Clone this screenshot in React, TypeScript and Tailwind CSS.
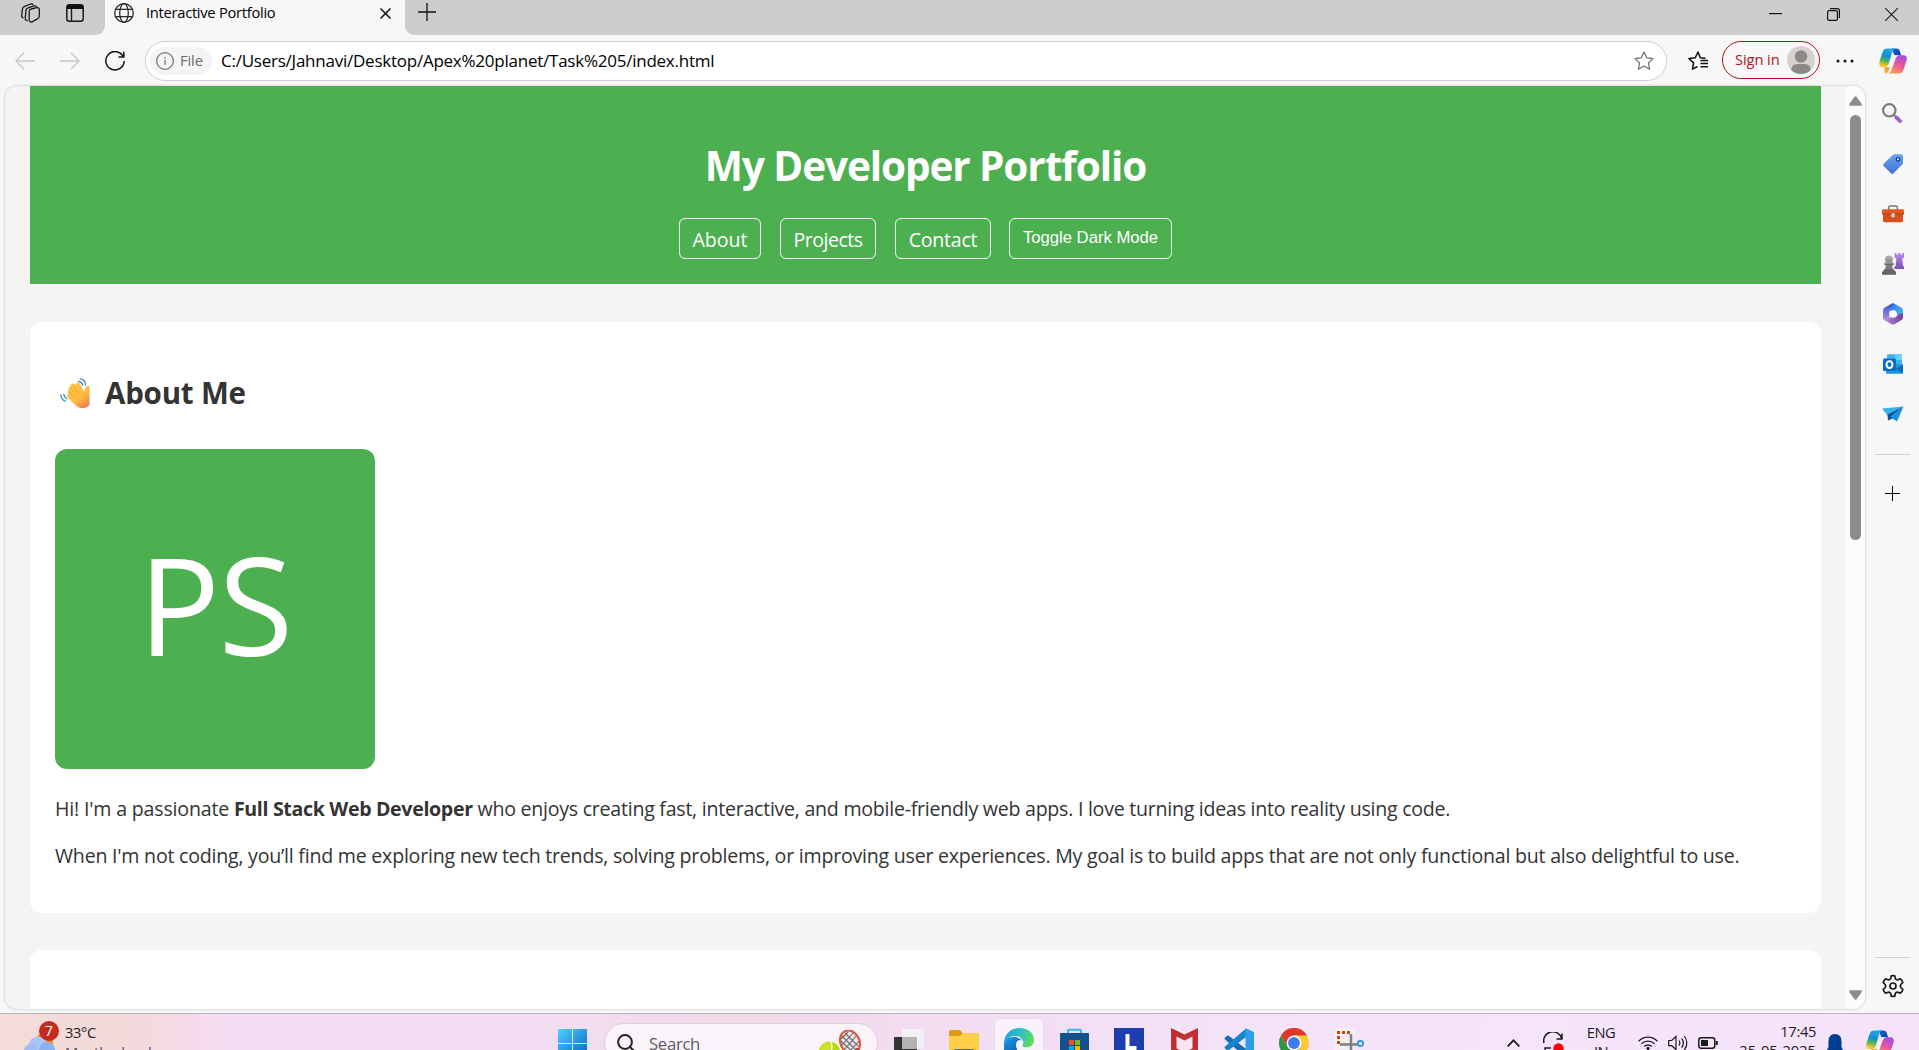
import React from "react";

type P = { className?: string };

const Copilot = ({ id, className }: { id: string; className?: string }) => (
  <svg viewBox="0 0 28 26" className={className}>
    <defs>
      <linearGradient id={id + "a"} x1="0.4" y1="0" x2="0.2" y2="1">
        <stop offset="0" stopColor="#1ea7e8" />
        <stop offset="0.4" stopColor="#0f8fd0" />
        <stop offset="0.65" stopColor="#52b45a" />
        <stop offset="0.9" stopColor="#f0cb1c" />
      </linearGradient>
      <linearGradient id={id + "b"} x1="0.8" y1="0" x2="0.3" y2="1">
        <stop offset="0" stopColor="#a04ee8" />
        <stop offset="0.5" stopColor="#e8559d" />
        <stop offset="1" stopColor="#ff9a4a" />
      </linearGradient>
      <linearGradient id={id + "c"} x1="0" y1="0" x2="1" y2="1">
        <stop offset="0" stopColor="#1566d6" />
        <stop offset="1" stopColor="#0b3fa8" />
      </linearGradient>
    </defs>
    <path d="M13 .5h4.500c1.800 0 2.800.9 3.300 2.600l1.300 4.400h-4.600c-1.600 0-2.700-.8-3.100-2.500z" fill={`url(#${id}c)`} />
    <path d="M8.500.5H16c-1.500.4-2.200 1.700-2.800 3.600L9.800 15.500c-.7 2.200-1.800 3.400-4.200 3.400H3.500C.4 18.900-.3 16.300.6 13L3.500 4.200C4.400 1.600 5.800.5 8.500.5z" fill={`url(#${id}a)`} />
    <path d="M5.700 18.900h4.900L9.600 22.500c-.5 1.500-1.100 2.500-2.200 2.800-1.900 0-2.300-3-1.700-6.400z" fill="#f7a63a" />
    <path d="M19.500 25.500H8.500c2 0 3.300-1.400 4-3.700l3.700-11c.8-2.300 2-3.600 4.400-3.600h3.900c3.100 0 3.900 2.400 2.900 5.700l-2.900 8.900c-.9 2.500-2.300 3.700-5 3.700z" fill={`url(#${id}b)`} />
    <path d="M14.200 8.800q1-1.600 3.800-1.600h2q-2.400.4-3.300 3L13.500 19q-.8 2-2.600 2z" fill="#fbf4f6" />
  </svg>
);

const Collections = ({ className }: P) => (
  <svg viewBox="0 0 22 22" className={className} fill="none" stroke="#1b1b1b" strokeWidth="1.300">
    <path d="M12.300 7 17.800 5.600c1.600-.3 2.500.5 2.500 1.900v6.800c0 1.300-.6 2-1.900 2.600l-5.300 2.900c-1.600.6-2.900-.2-2.900-1.800V9.300c0-1.200.7-2 2.100-2.300z" />
    <path d="M8.600 18.500c-1.800.1-2.600-.9-2.300-2.500l.6-7.600c.2-1.500 1-2.200 2.200-2.500l6-2c1.300-.3 2.200 0 2.500 1" />
    <path d="M4.600 15.800c-1.500-.1-2.200-1-1.900-2.500l.7-6.200c.2-1.500.9-2.200 2.200-2.700l6-2.400c1.100-.3 2-.1 2.400.9" />
  </svg>
);
const TabLayout = ({ className }: P) => (
  <svg viewBox="0 0 18 18" className={className}>
    <rect x=".8" y=".8" width="16.400" height="16.400" rx="2.500" fill="none" stroke="#1b1b1b" strokeWidth="1.500" />
    <path d="M.8 5V3Q.8.8 3 .8h12Q17.200.8 17.200 3v2z" fill="#111" />
    <path d="M5.500 5v12" stroke="#1b1b1b" strokeWidth="1.400" />
  </svg>
);
const Globe = ({ className }: P) => (
  <svg viewBox="0 0 20 20" className={className} fill="none" stroke="#2b2b2b" strokeWidth="1.300">
    <circle cx="10" cy="10" r="9.300" />
    <ellipse cx="10" cy="10" rx="4.300" ry="9.300" />
    <path d="M1.700 6.300h16.600M1.700 13.700h16.600" />
  </svg>
);
const Arrow = ({ className }: P) => (
  <svg viewBox="0 0 20 18" className={className} fill="none" stroke="#c6c6c6" strokeWidth="1.300">
    <path d="M20 9H1M9 .8.800 9 9 17.200" />
  </svg>
);
const Reload = ({ className }: P) => (
  <svg viewBox="0 0 20 20" className={className} fill="none" stroke="#111" strokeWidth="1.500">
    <path d="M18.300 5.800A9.200 9.200 0 1 0 19.200 10M18.800.8v5.200h-5.300" />
  </svg>
);
const starPath = "M10 1l2.700 5.800 6.300.8-4.600 4.300 1.200 6.300L10 15.100l-5.600 3.100 1.200-6.300L1 7.600l6.300-.8z";

const Magnifier = ({ className }: P) => (
  <svg viewBox="0 0 20 20" className={className}>
    <path d="M11.500 11.500l3 3" stroke="#888" strokeWidth="2" />
    <path d="M14.600 14.600l3.400 3.400" stroke="#9560cf" strokeWidth="3.800" strokeLinecap="round" />
    <circle cx="7.300" cy="7.300" r="6.200" fill="#f4f6f8" stroke="#7b7b7b" strokeWidth="2.200" />
  </svg>
);
const Tag = ({ className }: P) => (
  <svg viewBox="0 0 20 20" className={className}>
    <defs>
      <linearGradient id="tag" x1="0" y1="0" x2="0" y2="1">
        <stop offset="0" stopColor="#6ba4f0" />
        <stop offset="1" stopColor="#3f72d8" />
      </linearGradient>
    </defs>
    <path d="M11.500.3h6.500q2 0 2 2v6.500q0 1-.8 1.800l-8.600 8.700q-1.300 1.200-2.600 0L.8 12.200q-1.200-1.300 0-2.600L9.800.9q.7-.6 1.700-.6z" fill="url(#tag)" />
    <circle cx="15" cy="5.300" r="1.700" fill="#fff" stroke="#1d3f96" strokeWidth="1.400" />
  </svg>
);
const Toolbox = ({ className }: P) => (
  <svg viewBox="0 0 22 18" className={className}>
    <path d="M6.700 5V2.300q0-1.300 1.300-1.300h6q1.300 0 1.300 1.300V5" fill="none" stroke="#7a7a7a" strokeWidth="1.500" />
    <path d="M1 8h20v7.700q0 1.500-1.500 1.500h-17Q1 17.200 1 15.700z" fill="#d9501f" />
    <rect y="4.300" width="22" height="5" rx="1.300" fill="#e25a22" />
    <path d="M0 9h22" stroke="#a83612" strokeWidth=".9" />
    <rect x="9.200" y="8" width="3.800" height="4.500" rx="1.500" fill="#c9c9c9" />
  </svg>
);
const Chess = ({ className }: P) => (
  <svg viewBox="0 0 22 22" className={className}>
    <defs>
      <linearGradient id="rook" x1="0" y1="0" x2="0" y2="1">
        <stop offset="0" stopColor="#ba8df0" />
        <stop offset="1" stopColor="#7a4db8" />
      </linearGradient>
      <linearGradient id="pawn" x1="0" y1="0" x2="0" y2="1">
        <stop offset="0" stopColor="#b0b0b0" />
        <stop offset="1" stopColor="#5c5c5c" />
      </linearGradient>
    </defs>
    <path d="M12.500 0h2v1.800H16V0h2.500v1.800H20V0h2v4.500l-1.700 1.200.7 6.800 1 1.500v2h-9.500v-2l1.200-1.500.6-6.800-1.800-1.200z" fill="url(#rook)" />
    <path d="M7 2.500a4 4 0 0 1 3 6.800q2 .4 2 1.600t-2 1.300q0 3 2.200 5 1.900.8 1.900 2.500v1q0 1-1 1H1q-1 0-1-1v-1q0-1.700 1.900-2.500Q4 15.200 4 12.200q-2-.1-2-1.300t2-1.600A4 4 0 0 1 7 2.500z" fill="url(#pawn)" />
    <path d="M3 11.800h8M2 17.300h10" stroke="#555" strokeWidth=".8" />
  </svg>
);
const M365 = ({ className }: P) => (
  <svg viewBox="0 0 20 22" className={className}>
    <defs>
      <linearGradient id="mLeft" x1="0.500" y1="0" x2="0.300" y2="1">
        <stop offset="0" stopColor="#3559c9" />
        <stop offset="1" stopColor="#a98be8" />
      </linearGradient>
      <linearGradient id="mRight" x1="0" y1="0" x2="1" y2="1">
        <stop offset="0" stopColor="#3467dc" />
        <stop offset="1" stopColor="#45c4f2" />
      </linearGradient>
      <linearGradient id="mLow" x1="0" y1="0" x2="1" y2="0">
        <stop offset="0" stopColor="#c292ea" />
        <stop offset="1" stopColor="#6f3f98" />
      </linearGradient>
    </defs>
    <path d="M10 0 18.500 4.800Q20 5.700 20 7.500v6L10 11 4 4z" fill="url(#mRight)" />
    <path d="M8.500.8Q11 0 10.500 2.500 7 4.500 6.500 8v6L1.500 17Q0 16 0 14.500v-7Q0 5.700 1.500 4.800z" fill="url(#mLeft)" />
    <path d="M0 14.800Q3 17 6.500 14.500l6-1.500L20 10v4.500q0 1.700-1.500 2.600L11.800 21q-1.800 1-3.600 0L1.500 17.200Q0 16.300 0 14.800z" fill="url(#mLow)" />
    <circle cx="10.200" cy="11" r="3.800" fill="#fdfbff" />
  </svg>
);
const Outlook = ({ className }: P) => (
  <svg viewBox="0 0 20 20" className={className}>
    <rect x="4" y=".3" width="15" height="12" rx="1" fill="#3cb4ee" />
    <path d="M12 .3h6q1 0 1 1V6h-7z" fill="#66d3fa" />
    <path d="M3 9l17 1.500v8q0 1.300-1.300 1.300H4.300Q3 19.800 3 18.500z" fill="#1e96dc" />
    <path d="M20 10.500v9L12.500 15z" fill="#0f6cb8" />
    <rect y="4.500" width="13" height="12.500" rx="1.300" fill="#0a6cc8" />
    <ellipse cx="6.500" cy="10.600" rx="3" ry="3.400" fill="none" stroke="#fff" strokeWidth="1.900" />
  </svg>
);
const Plane = ({ className }: P) => (
  <svg viewBox="0 0 22 16" className={className}>
    <path d="M0 2.500 21.500.5 6 10z" fill="#35b1ee" />
    <path d="M5.500 8.500 21.500.5 8 11.500l-2 3.500z" fill="#0c4f9a" />
    <path d="M8 11 21.500.5 15 15.500z" fill="#1c8fe0" />
    <path d="M6 14.500 8 10.800l2.500 1.400z" fill="#083c7c" />
  </svg>
);
const Gear = ({ className }: P) => (
  <svg viewBox="0 0 24 24" className={className} fill="none" stroke="#1b1b1b" strokeWidth="1.700" strokeLinejoin="round">
    <path d="M9.700 4.600 10.300 1.800Q12 1.300 13.700 1.800L14.300 4.600Q15 5.900 16.800 5.800L19.500 4.900Q21.300 6.300 21.800 8.600L19.800 10.500Q18.900 12 19.800 13.500L21.800 15.400Q21.300 17.700 19.500 19.100L16.800 18.200Q15 18.100 14.300 19.400L13.700 22.200Q12 22.700 10.300 22.200L9.700 19.400Q9 18.100 7.200 18.200L4.500 19.100Q2.700 17.700 2.200 15.400L4.200 13.500Q5.100 12 4.200 10.500L2.200 8.600Q2.700 6.300 4.500 4.900L7.200 5.800Q9 5.900 9.700 4.600z" />
    <circle cx="12" cy="12" r="3" />
  </svg>
);
const Wave = ({ className }: P) => (
  <svg viewBox="0 0 30 31" className={className}>
    <defs>
      <linearGradient id="hand" x1="0" y1="0" x2="0.700" y2="1">
        <stop offset="0" stopColor="#ffcf4a" />
        <stop offset="0.700" stopColor="#fdb73e" />
        <stop offset="1" stopColor="#ef8350" />
      </linearGradient>
    </defs>
    <g fill="none" stroke="#2f86c8" strokeWidth="1.200" strokeLinecap="round">
      <path d="M.8 16.500Q1 21.500 5.500 23.300M3.800 16.300Q4 19.200 7 20.800M18.300 3.300Q22.500 4 22.800 7.500M20.300.8Q25.500 1.500 25.500 7" />
    </g>
    <path d="M8.200 15.600Q7 13.300 8.700 12.200 7.600 9.500 10 8.700q-.3-2.600 2-3 2-.5 3.400 1.300Q16.200 4 18.500 4.600q1.400.5 2 2l2.400 5.500 1.600 1.700q.2-4.300 2.500-5.800 2-1 2.500.5V27q-3 3.300-7 3.300-4.500 0-8-4L8 20q-1.500-2-.4-3.200z" fill="url(#hand)" />
    <path d="M10 9.500l5.500 7.500M13 7l5 8M8.700 13l5 6" stroke="#e89a2c" strokeWidth=".8" fill="none" strokeLinecap="round" />
  </svg>
);

/* Taskbar icons */
const WinLogo = () => (
  <svg viewBox="0 0 29 29" className="size-[29px]">
    <defs>
      <linearGradient id="win" x1="0" y1="0" x2="29" y2="29" gradientUnits="userSpaceOnUse">
        <stop offset="0" stopColor="#4fcfff" />
        <stop offset="1" stopColor="#0067c0" />
      </linearGradient>
    </defs>
    <path d="M1 0h13v14H0V1zM15 0h13q1 0 1 1v13H15zM0 15h14v14H0zM15 15h14v14H15z" fill="url(#win)" />
  </svg>
);
const Tennis = () => (
  <svg viewBox="0 0 44 30" className="h-[30px] w-[44px]">
    <ellipse cx="31" cy="12" rx="9.500" ry="12" transform="rotate(-25 31 12)" fill="#e9e4e8" stroke="#e2573c" strokeWidth="2.200" />
    <path d="M23 6l14 14M26 3l13 13M22 11l13 12M23 15l12-13M25 20 38 5M30 22l10-11M22 9l7-7" stroke="#6d6a70" strokeWidth="1.100" />
    <path d="M38 18l4 11" stroke="#d23a2c" strokeWidth="3" />
    <circle cx="10.500" cy="22" r="10.500" fill="#b6d80e" />
    <circle cx="7" cy="18" r="5" fill="#d6ec3a" opacity=".6" />
    <path d="M11.500 11.500Q15 18 10 25" fill="none" stroke="#f6fbe0" strokeWidth="1.500" />
  </svg>
);
const TaskView = () => (
  <svg viewBox="0 0 30 30" className="size-[30px]">
    <rect y="8" width="23" height="22" rx="1" fill="#333" />
    <rect x="8" width="22" height="20" rx="1" fill="#f1f1f1" />
    <path d="M8 8h15v12H8z" fill="#b3b3b3" />
  </svg>
);
const Folder = () => (
  <svg viewBox="0 0 30 30" className="size-[30px]">
    <path d="M0 3.500Q0 2 1.500 2H10q1 0 1.700.8L13.500 5H30v6H0z" fill="#dd9a12" />
    <path d="M0 8h11l3-3h15q1 0 1 1v24H0z" fill="#ffcf4b" />
    <path d="M5 22.500Q5 21 6.500 21h17q1.500 0 1.500 1.500V30H5z" fill="#1f7fc4" />
  </svg>
);
const Edge = () => (
  <svg viewBox="0 0 30 30" className="size-[30px]">
    <defs>
      <linearGradient id="edgeTop" x1="0" y1="0.300" x2="1" y2="0.500">
        <stop offset="0" stopColor="#1d9fe0" />
        <stop offset="0.500" stopColor="#2fc0c8" />
        <stop offset="1" stopColor="#5fdc54" />
      </linearGradient>
      <linearGradient id="edgeLow" x1="0" y1="0" x2="0.800" y2="1">
        <stop offset="0" stopColor="#1b9de2" />
        <stop offset="1" stopColor="#0c3f9c" />
      </linearGradient>
    </defs>
    <path d="M0 15Q2 8 11 9q6 .8 7.500 5-6-2-6 4 0 7 7 8 4 .5 9-2A15 15 0 0 1 0 15z" fill="url(#edgeLow)" />
    <path d="M0 14.500A15 15 0 0 1 15 0q14.500.5 15 12.500Q29.500 19 23 19.300q-5 0-5-2 2-1.500 1-4.300Q17 8 10.500 8 3 8.500 0 14.500z" fill="url(#edgeTop)" />
    <path d="M18.700 12.800q1.300 2.700-.7 4.500 0 1.500 2.500 2-3 2-6.500 3.500-3-5-1.500-8.500 2-3.500 6.200-1.500z" fill="#f9f1fb" />
  </svg>
);
const Store = () => (
  <svg viewBox="0 0 29 30" className="h-[30px] w-[29px]">
    <path d="M8 7V3q0-1.200 1.200-1.200h10.600Q21 1.800 21 3v4" fill="none" stroke="#2fb7f2" strokeWidth="2" />
    <path d="M0 6q0-1 1-1h27q1 0 1 1v24H0z" fill="#12508f" />
    <path d="M9 12h5v5H9z" fill="#f25022" /><path d="M15 12h5v5h-5z" fill="#7fba00" />
    <path d="M9 18h5v5H9z" fill="#00a4ef" /><path d="M15 18h5v5h-5z" fill="#ffb900" />
  </svg>
);
const LApp = () => (
  <svg viewBox="0 0 30 30" className="size-[30px]">
    <path d="M0 0h30v30H0z" fill="#1d3fae" />
    <path d="M12 10v12L8 30h5z" fill="#0c2350" />
    <path d="M11.500 6h4v12h7v4h-11z" fill="#fff" />
  </svg>
);
const McAfee = () => (
  <svg viewBox="0 0 27 30" className="h-[30px] w-[27px]">
    <path d="M0 0l13.500 6.500L27 0v24l-13.500 6L0 24z" fill="#bf2f33" />
    <path d="M5.500 8.500l8 4 8-4v12l-8 3.500-8-3.500z" fill="#f6e4f3" />
  </svg>
);
const VSCode = () => (
  <svg viewBox="0 0 30 30" className="size-[30px]">
    <path d="M1 9.500l2-1.700q1-.6 2 .2L22 21v8.500L1 11.500q-1-1 0-2z" fill="#0f6fb8" />
    <path d="M1 20.500l2 1.700q1 .6 2-.2L22 9V.5L1 18.500q-1 1 0 2z" fill="#1484cc" />
    <path d="M21.500.2 29 3.500q1 .5 1 1.500v20q0 1-1 1.500l-7.500 3.300z" fill="#2a9fe8" />
  </svg>
);
const Chrome = () => (
  <svg viewBox="0 0 30 30" className="size-[30px]">
    <circle cx="15" cy="15" r="15" fill="#fcc934" />
    <path d="M2 7.500A15 15 0 0 1 28 7.500H15L8.500 18.700z" fill="#dd3a2d" />
    <path d="M2 7.500 8.500 18.700Q11 22.500 15 22.500q3 0 6-3.500l-6.500 11A15 15 0 0 1 2 7.500z" fill="#2b9a48" />
    <circle cx="15" cy="15" r="7.400" fill="#fff" />
    <circle cx="15" cy="15" r="5.900" fill="#3b7ded" />
  </svg>
);
const Snip = () => (
  <svg viewBox="0 0 30 30" className="size-[30px]">
    <rect width="21" height="26" rx="2" fill="#f1eff3" />
    <path d="M3 3h3v3H3zM8 3h3v3H8zM13 3h3v3h-3zM3 8h3v3H3zM3 13h3v3H3z" fill="#cf4413" />
    <path d="M17 6v24M6 16.500h18" stroke="#7d8084" strokeWidth="2.500" />
    <circle cx="26.500" cy="15.500" r="2.600" fill="none" stroke="#1f97dc" strokeWidth="1.700" />
  </svg>
);

const seg = "font-['Open_Sans','Noto_Sans',sans-serif]";

const NavButton = ({ label, className }: { label: string; className: string }) => (
  <a className={`flex h-[41px] items-center justify-center whitespace-nowrap rounded-[6px] border border-white text-white ${className}`}>{label}</a>
);

const TaskIcon = ({ children, active }: { children: React.ReactNode; active?: boolean }) => (
  <div className={`mr-[7px] flex h-[48px] w-[48px] shrink-0 justify-center pt-[9px] ${active ? "rounded-[6px] bg-[#f9f1fb] ring-1 ring-[#eadff0]" : ""}`}>{children}</div>
);

export default function App() {
  return (
    <div className={`flex h-[1050px] w-[1919px] flex-col overflow-hidden bg-[#f7f7f7] text-black ${seg}`}>
      {/* Tab strip */}
      <header className="flex h-[35px] shrink-0">
        <div className="flex w-[105px] items-start rounded-br-[9px] bg-[#cdcdcd]">
          <Collections className="ml-[19px] mt-[2px] size-[22px]" />
          <TabLayout className="ml-[25px] mt-[4px] size-[18px]" />
        </div>
        <div className="flex w-[300px] items-start">
          <Globe className="ml-[9px] mt-[3px] size-[20px]" />
          <span className="ml-[12px] w-[234px] whitespace-nowrap text-[14.7px] leading-[25px] tracking-[-0.27px]">Interactive Portfolio</span>
          <svg viewBox="0 0 11 11" className="mt-[8px] size-[11px]" stroke="#111" strokeWidth="1.500"><path d="M.5.5l10 10M10.500.5l-10 10" /></svg>
        </div>
        <div className="flex flex-1 items-start rounded-bl-[9px] bg-[#cdcdcd]">
          <svg viewBox="0 0 18 18" className="ml-[13px] mt-[3px] size-[18px]" stroke="#111" strokeWidth="1.300"><path d="M9 0v18M0 9h18" /></svg>
          <div className="flex-1" />
          <svg viewBox="0 0 13 2" className="mr-[45px] mt-[13px] h-[2px] w-[13px]" fill="#111"><path d="M0 0h13v1.200H0z" /></svg>
          <svg viewBox="0 0 13 13" className="mr-[45px] mt-[8px] size-[13px]" fill="none" stroke="#111" strokeWidth="1.200">
            <rect x=".6" y="2.600" width="9.800" height="9.800" rx="1.500" /><path d="M3 .6h7.400q2 0 2 2V10" />
          </svg>
          <svg viewBox="0 0 13 13" className="mr-[21px] mt-[8px] size-[13px]" stroke="#222" strokeWidth="1.200"><path d="M0 0l13 13M13 0 0 13" /></svg>
        </div>
      </header>

      {/* Toolbar */}
      <div className="flex h-[51px] shrink-0 items-center">
        <Arrow className="ml-[15px] h-[18px] w-[20px]" />
        <Arrow className="ml-[25px] h-[18px] w-[20px] rotate-180" />
        <Reload className="ml-[25px] size-[20px]" />
        <div className="ml-[20px] flex h-[40px] w-[1522px] items-center rounded-full border border-[#cfcfcf] bg-white">
          <div className="ml-[4px] flex h-[28px] w-[62px] items-center rounded-full bg-[#f4f4f4] pl-[6px] text-[#6b6b6b]">
            <svg viewBox="0 0 18 18" className="size-[18px]" fill="none" stroke="#757575" strokeWidth="1.300"><circle cx="9" cy="9" r="8.300" /><path d="M9 7.800v5M9 5v1.400" /></svg>
            <span className="ml-[6px] text-[14.7px] font-medium tracking-[-0.1px]">File</span>
          </div>
          <span className="ml-[9px] flex-1 whitespace-nowrap text-[17px] tracking-[-0.24px]">C:/Users/Jahnavi/Desktop/Apex%20planet/Task%205/index.html</span>
          <svg viewBox="0 0 20 20" className="mr-[12px] size-[20px]" fill="none" stroke="#707070" strokeWidth="1.200" strokeLinejoin="round"><path d={starPath} /></svg>
        </div>
        <svg viewBox="0 0 20 20" className="ml-[21px] size-[20px]" fill="none" stroke="#111" strokeWidth="1.500" strokeLinejoin="round">
          <path d="M17.500 7.300 12.300 6.700 10 1 7.300 6.800 1 7.600l4.600 4.300-1.200 6.300 5-2.700M12.500 9.500H20M12.500 12.600H20M12.500 15.700H20" />
        </svg>
        <div className="mb-[2px] ml-[14px] flex h-[38px] w-[98px] items-center rounded-full border border-[#b0141f] pl-[12px] text-[#b0141f]">
          <span className="w-[52px] whitespace-nowrap text-[14.7px] tracking-[-0.1px]">Sign in</span>
          <svg viewBox="0 0 28 28" className="size-[28px]">
            <circle cx="14" cy="14" r="14" fill="#d4d2cf" /><circle cx="14" cy="10.500" r="6.200" fill="#8b8885" />
            <path d="M4.200 24Q5 18 10 18h8q5 0 5.800 6A14 14 0 0 1 4.200 24z" fill="#8b8885" />
          </svg>
        </div>
        <svg viewBox="0 0 18 4" className="ml-[16px] h-[4px] w-[18px]" fill="#111"><circle cx="2" cy="2" r="1.500" /><circle cx="9" cy="2" r="1.500" /><circle cx="16" cy="2" r="1.500" /></svg>
        <Copilot id="top" className="ml-[25px] h-[26px] w-[28px]" />
      </div>

      {/* Browser body */}
      <div className="flex h-[927px] shrink-0 pl-[5px]">
        <main className="flex h-[923px] w-[1860px] overflow-hidden rounded-[12px] bg-[#f4f4f4] shadow-[0_0_2px_1px_#dadada]">
          <div className="ml-[25px] flex w-[1791px] flex-col text-[#333]">
            <section className="flex h-[198px] shrink-0 flex-col items-center bg-[#4caf50]">
              <h1 className="mt-[60px] whitespace-nowrap text-[40.500px] font-bold leading-[40px] tracking-[-1.100px] text-white">My Developer Portfolio</h1>
              <nav className="mt-[32px] flex text-[19.6px] tracking-[0px]">
                <NavButton label="About" className="w-[82px] pt-[2px]" />
                <NavButton label="Projects" className="ml-[19px] w-[96px] pt-[2px] tracking-[-0.500px]" />
                <NavButton label="Contact" className="ml-[19px] w-[96px] pt-[2px] tracking-[-0.250px]" />
                <NavButton label="Toggle Dark Mode" className="ml-[18px] w-[163px] pb-[3px] font-['Liberation_Sans',Arial,sans-serif] text-[16.67px] tracking-normal" />
              </nav>
            </section>
            <section className="mt-[38px] h-[591px] shrink-0 rounded-[12px] bg-white px-[25px]">
              <h2 className="flex items-center pt-[51px] text-[29.500px] font-bold leading-[40px] tracking-[-0.200px] text-[#333]">
                <Wave className="ml-[5px] mr-[15px] h-[31px] w-[30px]" />
                About Me
              </h2>
              <div className="mt-[36px] flex size-[320px] items-center justify-center rounded-[12px] bg-[#4caf50] pb-[10px] text-[136px] leading-none tracking-[-1.500px] text-white">PS</div>
              <p className="mt-[24px] whitespace-nowrap text-[19.6px] leading-[32px] tracking-[-0.26px]">
                <span className="tracking-[-0.190px]">Hi! I'm a passionate </span><strong className="font-bold tracking-[-0.34px]">Full Stack Web Developer</strong> who enjoys creating fast, interactive, and mobile-friendly web apps. I love turning ideas into reality using code.
              </p>
              <p className="mt-[15px] whitespace-nowrap text-[19.6px] leading-[32px] tracking-[-0.235px]">
                When I'm not coding, you’ll find me exploring new tech trends, solving problems, or improving user experiences. My goal is to build apps that are not only functional but also delightful to use.
              </p>
            </section>
            <section className="mt-[37px] h-[100px] shrink-0 rounded-[12px] bg-white" />
          </div>
          <div className="ml-auto flex w-[19px] flex-col items-center bg-[#fcfcfc]">
            <svg viewBox="0 0 13 10" className="mt-[10px] h-[10px] w-[13px] shrink-0" fill="#8b8b8b"><path d="M5.500.7q1-1 2 0L12.700 8q.5 1.700-1 1.700H1.300Q-.2 9.700.3 8z" /></svg>
            <div className="mt-[9px] h-[425px] w-[11px] rounded-full bg-[#8b8b8b]" />
            <svg viewBox="0 0 13 10" className="mb-[9px] mt-auto h-[10px] w-[13px] shrink-0 rotate-180" fill="#8b8b8b"><path d="M5.500.7q1-1 2 0L12.700 8q.5 1.700-1 1.700H1.300Q-.2 9.700.3 8z" /></svg>
          </div>
        </main>
        <aside className="flex w-[54px] flex-col items-center">
          <div className="mt-[2px] flex h-[50px] items-center"><Magnifier className="size-[20px]" /></div>
          <div className="flex h-[51px] items-center"><Tag className="ml-[2px] size-[20px]" /></div>
          <div className="flex h-[50px] items-center"><Toolbox className="ml-[2px] h-[18px] w-[22px]" /></div>
          <div className="flex h-[50px] items-center"><Chess className="ml-[2px] size-[22px]" /></div>
          <div className="flex h-[50px] items-center"><M365 className="ml-[2px] h-[22px] w-[20px]" /></div>
          <div className="flex h-[50px] items-center"><Outlook className="ml-[2px] size-[20px]" /></div>
          <div className="flex h-[50px] items-center"><Plane className="ml-[2px] h-[16px] w-[22px]" /></div>
          <div className="mt-[15px] h-px w-[35px] bg-[#cfcfcf]" />
          <svg viewBox="0 0 15 15" className="mt-[31px] size-[15px]" fill="#000"><path d="M7 0h1v15H7zM0 7h15v1H0z" /></svg>
          <div className="mt-auto h-px w-[35px] bg-[#cfcfcf]" />
          <Gear className="mb-[15px] ml-[2px] mt-[16px] size-[24px]" />
        </aside>
      </div>

      {/* Taskbar */}
      <footer className="flex h-[37px] shrink-0 items-start overflow-hidden border-t border-[#b9b2bb] bg-[linear-gradient(90deg,#f4dcd8_0,#f3dadb_130px,#f6dcf4_235px,#f3def5_500px,#f1d9e6_740px,#f2dcf0_900px,#f3e1f6_1150px,#f6e5fa_1500px,#f5e4f9_1919px)]">
        <svg viewBox="0 0 36 44" className="ml-[24px] mt-[6px] h-[44px] w-[36px]">
          <circle cx="20" cy="22" r="9" fill="#f08a24" />
          <circle cx="14" cy="26" r="9.500" fill="#a9c6f6" /><circle cx="23" cy="30" r="8" fill="#8db2f0" /><circle cx="7" cy="31" r="7" fill="#9fbff4" />
          <circle cx="25" cy="11" r="10" fill="#c62a1e" />
          <text x="25" y="16" textAnchor="middle" fontSize="14.500" fill="#fff">7</text>
        </svg>
        <div className="ml-[5px] mt-[8px] w-[493px] whitespace-nowrap text-[14.700px] leading-[20px] text-[#222]">
          <div className="tracking-[-0.35px]">33°C</div>
          <div className="text-[#555]">Mostly cloudy</div>
        </div>
        <div className="mt-[15px]"><WinLogo /></div>
        <div className="ml-[17px] mt-[9px] flex h-[40px] w-[274px] items-start rounded-full border border-[#dccfdf] bg-[#faf4fa]">
          <svg viewBox="0 0 18 18" className="ml-[12px] mt-[10px] size-[18px]" fill="none" stroke="#222" strokeWidth="2"><circle cx="8" cy="8" r="6.900" /><path d="M13 13l4.500 4.500" strokeLinecap="round" /></svg>
          <span className="ml-[14px] mt-[8px] w-[170px] text-[16.7px] leading-[24px] tracking-[-0.3px] text-[#5c5a5e]">Search</span>
          <div className="mt-[6px]"><Tennis /></div>
        </div>
        <div className="ml-[7px] mt-[5px] flex">
          <TaskIcon><div className="mt-[1px]"><TaskView /></div></TaskIcon>
          <TaskIcon><Folder /></TaskIcon>
          <TaskIcon active><Edge /></TaskIcon>
          <TaskIcon><Store /></TaskIcon>
          <TaskIcon><LApp /></TaskIcon>
          <TaskIcon><McAfee /></TaskIcon>
          <TaskIcon><VSCode /></TaskIcon>
          <TaskIcon><Chrome /></TaskIcon>
          <TaskIcon><Snip /></TaskIcon>
        </div>
        <div className="ml-auto flex items-start text-[14.700px] leading-[19px] text-[#1b1b1b]">
          <svg viewBox="0 0 13 8" className="mt-[25px] h-[8px] w-[13px]" fill="none" stroke="#1b1b1b" strokeWidth="1.700"><path d="M.7 7.300 6.500 1.300l5.800 6" /></svg>
          <svg viewBox="0 0 21 22" className="ml-[23px] mt-[18px] h-[22px] w-[21px]" fill="none" stroke="#1b1b1b" strokeWidth="1.500">
            <path d="M1 11A9 9 0 0 1 18.500 6.500M19 1.500v5.500h-5.500M8 16H2v5" /><circle cx="15.500" cy="16.500" r="5.200" fill="#fb0007" stroke="none" />
          </svg>
          <div className="ml-[22px] mr-px mt-[9px] flex w-[30px] flex-col items-center tracking-[-0.5px]"><span>ENG</span><span>IN</span></div>
          <svg viewBox="0 0 20 15" className="ml-[21px] mt-[21px] h-[15px] w-[20px]" fill="none" stroke="#1b1b1b" strokeWidth="1.300">
            <path d="M.6 6.200a13 13 0 0 1 18.800 0M3.500 8.800a9.300 9.300 0 0 1 13 0M6.300 11.500a5.300 5.300 0 0 1 7.400 0" /><circle cx="10" cy="13.300" r="1.600" fill="#1b1b1b" stroke="none" />
          </svg>
          <svg viewBox="0 0 20 16" className="ml-[10px] mt-[21px] h-[16px] w-[20px]" fill="none" stroke="#1b1b1b" strokeWidth="1.200">
            <path d="M.7 5.500h3L8 1.500v13L3.700 10.700h-3zM11 5.500q1.700 2.500 0 5M13.700 3.300q3.300 4.700 0 9.400M16.300 1q5 7 0 14" />
          </svg>
          <svg viewBox="0 0 20 12" className="ml-[10px] mt-[23px] h-[12px] w-[20px]" fill="none" stroke="#1b1b1b" strokeWidth="1.500">
            <rect x=".8" y=".8" width="16" height="10.400" rx="2.500" /><path d="M3 3h7v6H3z" fill="#1b1b1b" stroke="none" /><path d="M18.700 4v4" strokeWidth="2" />
          </svg>
          <div className="ml-[10px] mt-[8px] flex w-[88px] flex-col items-end tracking-[-0.35px]"><span>17:45</span><span className="tracking-[0]">25-05-2025</span></div>
          <svg viewBox="0 0 16 18" className="ml-[11px] mt-[20px] h-[18px] w-[16px]" fill="#003e92"><path d="M8 0q6.500.3 6.500 7v6l1.500 3v2H0v-2l1.500-3V7Q1.500.3 8 0z" /></svg>
          <Copilot id="tray" className="ml-[23px] mr-[25px] mt-[16px] h-[26px] w-[28px]" />
        </div>
      </footer>
    </div>
  );
}
